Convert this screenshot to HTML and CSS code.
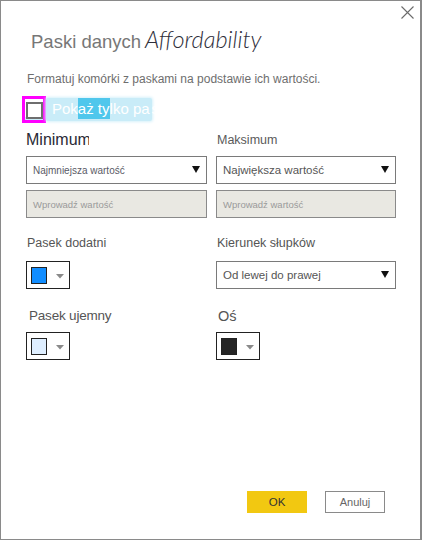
FILE: index.html
```html
<!DOCTYPE html>
<html lang="pl">
<head>
<meta charset="utf-8">
<title>Paski danych</title>
<link rel="stylesheet" href="styles.css">
</head>
<body>
<div class="dialog">
  <div class="topbar">
    <button class="close" aria-label="Zamknij">
      <svg width="13" height="13" viewBox="0 0 13 13"><path d="M0.5 0.5 L12.5 12.5 M12.5 0.5 L0.5 12.5" stroke="#6b6b6b" stroke-width="1.1" fill="none"/></svg>
    </button>
  </div>
  <h1 class="title"><span class="title-main">Paski danych</span><span class="title-field">Affordability</span></h1>
  <p class="desc">Formatuj komórki z paskami na podstawie ich wartości.</p>
  <div class="check-row">
    <span class="focus"><span class="checkbox"></span></span>
    <span class="check-label"><span class="band">Pok<span class="sel">aż ty</span>lko pa</span>sek</span>
  </div>

  <div class="row row-a">
    <div class="field">
      <div class="label big"><span class="clip">Minimum</span></div>
      <div class="select pixel"><span>Najmniejsza wartość</span><svg class="arrow" width="8" height="7" viewBox="0 0 8 7"><path d="M0 0 H8 L4 7 Z" fill="#111"/></svg></div>
      <div class="input">Wprowadź wartość</div>
    </div>
    <div class="field">
      <div class="label mid">Maksimum</div>
      <div class="select"><span>Największa wartość</span><svg class="arrow" width="8" height="7" viewBox="0 0 8 7"><path d="M0 0 H8 L4 7 Z" fill="#111"/></svg></div>
      <div class="input">Wprowadź wartość</div>
    </div>
  </div>

  <div class="row row-b">
    <div class="field">
      <div class="label small">Pasek dodatni</div>
      <div class="picker"><span class="swatch sw-blue"></span><svg class="caret" width="8" height="5" viewBox="0 0 8 5"><path d="M0 0 H8 L4 4.5 Z" fill="#8a8a8a"/></svg></div>
    </div>
    <div class="field">
      <div class="label small">Kierunek słupków</div>
      <div class="select"><span>Od lewej do prawej</span><svg class="arrow" width="8" height="7" viewBox="0 0 8 7"><path d="M0 0 H8 L4 7 Z" fill="#111"/></svg></div>
    </div>
  </div>

  <div class="row row-c">
    <div class="field">
      <div class="label med2 indent">Pasek ujemny</div>
      <div class="picker"><span class="swatch sw-light"></span><svg class="caret" width="8" height="5" viewBox="0 0 8 5"><path d="M0 0 H8 L4 4.5 Z" fill="#8a8a8a"/></svg></div>
    </div>
    <div class="field">
      <div class="label med3 indent">Oś</div>
      <div class="picker"><span class="swatch sw-dark"></span><svg class="caret" width="8" height="5" viewBox="0 0 8 5"><path d="M0 0 H8 L4 4.5 Z" fill="#8a8a8a"/></svg></div>
    </div>
  </div>

  <div class="footer">
    <button class="btn btn-ok">OK</button>
    <button class="btn btn-cancel">Anuluj</button>
  </div>
</div>
</body>
</html>
```
FILE: styles.css
```css
* { box-sizing: border-box; }
html, body { margin: 0; padding: 0; background: #fff; }
body { font-family: "Liberation Sans", Arial, sans-serif; }

.dialog {
  width: 422px;
  height: 540px;
  border: 1px solid #8a8a8a;
  border-right-width: 2px;
  display: flex;
  flex-direction: column;
  background: #fff;
}

.topbar {
  display: flex;
  justify-content: flex-end;
  padding: 5px 6px 0 0;
  height: 18px;
}
.close {
  border: 0;
  background: none;
  padding: 0;
  width: 13px;
  height: 13px;
  display: block;
}
.close svg { display: block; }

.title {
  margin: 5px 0 0 30px;
  height: 26px;
  line-height: 26px;
  font-weight: normal;
  white-space: nowrap;
}
.title-main {
  font-size: 18.5px;
  color: #777;
  font-family: "Liberation Sans", Arial, sans-serif;
}
.title-field {
  font-family: Lato, "Open Sans", sans-serif;
  font-style: italic;
  font-weight: 300;
  font-size: 23.5px;
  color: #2e2e3a;
  margin-left: 4px;
}

.desc {
  margin: 21px 0 0 26px;
  font-size: 12px;
  line-height: 16px;
  color: #6e6e6e;
}

.check-row {
  margin: 9px 0 0 21px;
  display: flex;
  align-items: center;
  height: 27px;
}
.focus {
  width: 24px;
  height: 27px;
  border: 3px solid #ff00ff;
  padding: 3px 0 0 1px;
  display: block;
  background: linear-gradient(to bottom, transparent 18px, #c9ecf8 18px);
}
.checkbox {
  display: block;
  width: 17px;
  height: 17px;
  border: 2px solid #6e6e6e;
  background: #fff;
}
.check-label {
  font-size: 15px;
  color: #fff;
  white-space: nowrap;
}
.band {
  display: inline-block;
  background: #c9ecf8;
  box-shadow: 0 0 3px 1px #d6f1fa;
  border-radius: 2px;
  padding: 2px 2px 3px 6px;
  line-height: 18px;
}
.sel {
  background: #4fc7ec;
  padding: 2px 0 2px;
}

.row {
  display: grid;
  grid-template-columns: 181px 180px;
  column-gap: 9px;
  padding-left: 25px;
}
.row-a { margin-top: 7px; }
.row-b { margin-top: 16px; }
.row-c { margin-top: 18px; }

.field { display: flex; flex-direction: column; }

.label { color: #555; white-space: nowrap; }
.label.big {
  font-size: 16px;
  line-height: 20px;
  color: #2a2a35;
  height: 20px;
}
.clip { display: inline-block; width: 63px; overflow: hidden; vertical-align: top; }
.label.mid { font-size: 12.5px; line-height: 20px; height: 20px; padding-left: 1px; color: #5a5a5a; }
.label.small { font-size: 12.5px; line-height: 18px; height: 18px; padding-left: 1px; color: #555; }
.label.med2 { font-size: 13.5px; line-height: 18px; height: 18px; color: #555; letter-spacing: -0.2px; }
.label.med3 { font-size: 14.5px; line-height: 18px; height: 18px; color: #555; }
.indent { padding-left: 3px; }
.row-c .field:last-child .indent { padding-left: 2px; }

.row-a .label { margin-bottom: 6px; }
.row-b .label { margin-bottom: 9px; }
.row-c .label { margin-bottom: 7px; }

.select {
  height: 28px;
  border: 1px solid #7a7a7a;
  display: flex;
  align-items: center;
  justify-content: space-between;
  padding: 0 6px 0 6px;
  font-size: 11.5px;
  color: #555;
  background: #fff;
}
.select.pixel { font-size: 10px; color: #5a5a66; }
.arrow { display: block; margin-top: -1px; }

.input {
  margin-top: 6px;
  height: 28px;
  border: 1px solid #8a8a8a;
  background: #e9e8e2;
  font-size: 9.5px;
  color: #9a9a9a;
  display: flex;
  align-items: center;
  padding-left: 6px;
}

.picker {
  width: 44px;
  height: 28px;
  border: 1px solid #222;
  display: flex;
  align-items: center;
  padding-left: 4px;
  background: #fff;
}
.swatch {
  display: block;
  width: 16px;
  height: 17px;
  border: 1px solid #222;
}
.sw-blue { background: #118dff; }
.sw-light { background: #deeeff; }
.sw-dark { background: #252525; }
.caret { display: block; margin-left: 9px; margin-top: 2px; }

.footer {
  margin-top: auto;
  display: flex;
  justify-content: flex-end;
  gap: 18px;
  padding: 0 35px 26px 0;
}
.btn {
  width: 60px;
  height: 22px;
  font-family: "Liberation Sans", Arial, sans-serif;
  font-size: 11px;
  padding: 0;
}
.btn-ok {
  background: #f2c811;
  border: 0;
  color: #333;
  font-size: 11.5px;
}
.btn-cancel {
  background: #fff;
  border: 1px solid #8a8a8a;
  color: #666;
}
```
